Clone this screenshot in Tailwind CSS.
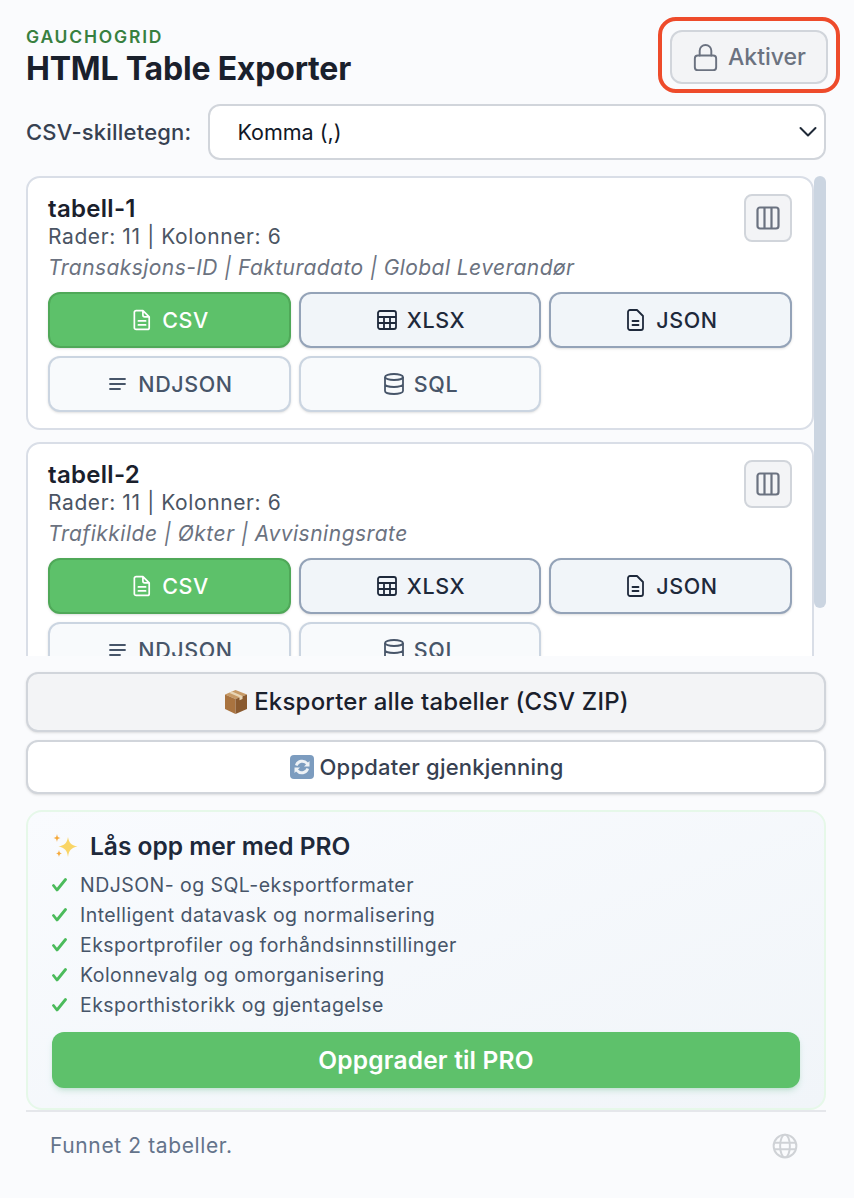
<!DOCTYPE html>
<html lang="no">
<head>
<meta charset="utf-8">
<title>HTML Table Exporter</title>
<script src="https://cdn.jsdelivr.net/npm/@tailwindcss/browser@4"></script>
</head>
<body class="m-0 bg-[#fafbfd] font-['Inter','Liberation_Sans',sans-serif] text-[#1a202c]">
<div class="w-[854px] h-[1198px] overflow-hidden pl-[26px] pr-[28px] flex flex-col">
  <header class="h-[104px] flex justify-between">
    <div class="pt-[26px]">
      <div class="text-[17.5px] leading-[21px] font-semibold tracking-[1.8px] text-[#38803f]">GAUCHOGRID</div>
      <h1 class="mt-[1px] text-[32px] leading-[42px] font-bold text-[#1a202c] tracking-[-0.2px]">HTML Table Exporter</h1>
    </div>
    <div class="mt-[30px] mr-[-2px]">
      <button class="relative w-[158px] h-[54px] rounded-[12px] border-2 border-[#d1d5db] bg-[#f3f4f6] flex items-center justify-center gap-[7px] pr-[2px] text-[23px] font-medium text-[#6b7280]">
        <span class="absolute left-[-14px] top-[-15px] w-[182px] h-[76px] rounded-[18px] border-[4px] border-[#ee4b2b]"></span>
        <svg class="w-[31px] h-[31px]" viewBox="0 0 24 24" fill="none" stroke="currentColor" stroke-width="1.5" stroke-linecap="round" stroke-linejoin="round"><path d="M16.5 10.5V6.75a4.5 4.5 0 1 0-9 0v3.75"/><rect x="3.75" y="10.5" width="16.5" height="11.25" rx="2.25"/></svg>
        Aktiver
      </button>
    </div>
  </header>

  <div class="h-[56px] flex items-center gap-[17px]">
    <label class="text-[22px] font-medium text-[#374151] whitespace-nowrap tracking-[0.2px]">CSV-skilletegn:</label>
    <div class="flex-1 h-[56px] rounded-[12px] border-2 border-[#d1d5db] bg-white flex items-center justify-between pl-[27px] pr-[6px] text-[21.5px] text-[#111827]">
      <span>Komma (,)</span>
      <svg class="w-[20px] h-[12px]" viewBox="0 0 20 12" fill="none" stroke="#1f2937" stroke-width="2" stroke-linecap="round" stroke-linejoin="round"><path d="M2.5 2l7.5 7.5L17.5 2"/></svg>
    </div>
  </div>

  <div class="relative mt-[16px] h-[480px] overflow-hidden pr-[12px] flex flex-col gap-[12px] shrink-0">
    <span class="absolute right-0 top-0 w-[12px] h-[432px] rounded-full bg-[#cbd5e1]"></span>

    <section class="shrink-0 h-[254px] rounded-[14px] border-2 border-[#d9dee7] bg-white pl-[20px] pr-[20px] pt-[16px] relative">
      <div class="text-[24px] leading-[30px] font-semibold text-[#1a202c] tracking-[0.3px]">tabell-1</div>
      <div class="text-[21px] leading-[26px] text-[#4b5563] tracking-[0.6px]">Rader: 11 | Kolonner: 6</div>
      <div class="mt-[2px] text-[21px] leading-[32px] italic text-[#6b7280] tracking-[0.43px]">Transaksjons-ID | Fakturadato | Global Leverandør</div>
      <button class="absolute right-[20px] top-[16px] w-[48px] h-[48px] rounded-[8px] border-2 border-[#d1d5db] bg-[#f3f4f6] flex items-center justify-center">
        <svg class="w-[24px] h-[24px]" viewBox="0 0 24 24" fill="none" stroke="#6b7280" stroke-width="2.2" stroke-linejoin="round"><rect x="1.5" y="1.5" width="21" height="21" rx="2.5"/><path d="M8.5 1.5v21M15.5 1.5v21"/></svg>
      </button>
      <div class="mt-[8px] grid grid-cols-[243px_242px_243px] gap-x-[8px] gap-y-[8px]">
        <button class="h-[56px] rounded-[12px] border-2 border-[#4fa858] bg-[#5dc16a] text-white flex items-center justify-center gap-[11px] pl-[3px] text-[21.5px] font-[550] tracking-[0.6px] shadow-sm">
          <svg class="w-[18px] h-[22px]" viewBox="0 0 20 24" fill="none" stroke="currentColor" stroke-width="1.9" stroke-linecap="round" stroke-linejoin="round"><path d="M3.5 1.5h7.5l7 7v12a2 2 0 0 1-2 2h-12.5a2 2 0 0 1-2-2v-17a2 2 0 0 1 2-2zM11 1.5v5a2 2 0 0 0 2 2h5M6 13h8M6 17.5h8"/></svg>
          CSV
        </button>
        <button class="h-[56px] rounded-[12px] border-2 border-[#94a3b8] bg-[#f1f5f9] text-[#1e293b] flex items-center justify-center gap-[10px] pl-[2px] text-[21.5px] font-[550] tracking-[0.6px] shadow-sm">
          <svg class="w-[20px] h-[20px]" viewBox="0 0 20 20" fill="none" stroke="currentColor" stroke-width="1.8" stroke-linejoin="round"><rect x="1" y="1" width="18" height="18" rx="2"/><path d="M1 7h18M1 13h18M7 7v12M13 7v12"/></svg>
          XLSX
        </button>
        <button class="h-[56px] rounded-[12px] border-2 border-[#94a3b8] bg-[#f1f5f9] text-[#1e293b] flex items-center justify-center gap-[12px] pl-[4px] text-[21.5px] font-[550] tracking-[0.6px] shadow-sm">
          <svg class="w-[17px] h-[22px]" viewBox="0 0 17 22" fill="none" stroke="currentColor" stroke-width="1.8" stroke-linecap="round" stroke-linejoin="round"><path d="M3 1h7l6 6v12a2 2 0 0 1-2 2H3a2 2 0 0 1-2-2V3a2 2 0 0 1 2-2zM5.5 12h6M5.5 16h6"/></svg>
          JSON
        </button>
        <button class="h-[56px] rounded-[12px] border-2 border-[#cbd5e1] bg-[#f8fafc] text-[#475569] flex items-center justify-center gap-[12px] pl-[3px] text-[21.5px] font-[550] tracking-[0.6px] shadow-sm">
          <svg class="w-[17px] h-[14px]" viewBox="0 0 17 14" fill="none" stroke="currentColor" stroke-width="1.8" stroke-linecap="round"><path d="M1 2h15M1 7h15M1 12h10"/></svg>
          NDJSON
        </button>
        <button class="h-[56px] rounded-[12px] border-2 border-[#cbd5e1] bg-[#f8fafc] text-[#475569] flex items-center justify-center gap-[10px] pl-[2px] text-[21.5px] font-[550] tracking-[0.6px] shadow-sm">
          <svg class="w-[20px] h-[22px]" viewBox="0 0 20 22" fill="none" stroke="currentColor" stroke-width="1.8"><ellipse cx="10" cy="4" rx="9" ry="3"/><path d="M1 4v14c0 1.7 4 3 9 3s9-1.3 9-3V4M1 11c0 1.7 4 3 9 3s9-1.3 9-3"/></svg>
          SQL
        </button>
      </div>
    </section>

    <section class="shrink-0 h-[254px] rounded-[14px] border-2 border-[#d9dee7] bg-white pl-[20px] pr-[20px] pt-[16px] relative">
      <div class="text-[24px] leading-[30px] font-semibold text-[#1a202c] tracking-[0.3px]">tabell-2</div>
      <div class="text-[21px] leading-[26px] text-[#4b5563] tracking-[0.6px]">Rader: 11 | Kolonner: 6</div>
      <div class="mt-[2px] text-[21px] leading-[32px] italic text-[#6b7280] tracking-[0.5px]">Trafikkilde | Økter | Avvisningsrate</div>
      <button class="absolute right-[20px] top-[16px] w-[48px] h-[48px] rounded-[8px] border-2 border-[#d1d5db] bg-[#f3f4f6] flex items-center justify-center">
        <svg class="w-[24px] h-[24px]" viewBox="0 0 24 24" fill="none" stroke="#6b7280" stroke-width="2.2" stroke-linejoin="round"><rect x="1.5" y="1.5" width="21" height="21" rx="2.5"/><path d="M8.5 1.5v21M15.5 1.5v21"/></svg>
      </button>
      <div class="mt-[8px] grid grid-cols-[243px_242px_243px] gap-x-[8px] gap-y-[8px]">
        <button class="h-[56px] rounded-[12px] border-2 border-[#4fa858] bg-[#5dc16a] text-white flex items-center justify-center gap-[11px] pl-[3px] text-[21.5px] font-[550] tracking-[0.6px] shadow-sm">
          <svg class="w-[18px] h-[22px]" viewBox="0 0 20 24" fill="none" stroke="currentColor" stroke-width="1.9" stroke-linecap="round" stroke-linejoin="round"><path d="M3.5 1.5h7.5l7 7v12a2 2 0 0 1-2 2h-12.5a2 2 0 0 1-2-2v-17a2 2 0 0 1 2-2zM11 1.5v5a2 2 0 0 0 2 2h5M6 13h8M6 17.5h8"/></svg>
          CSV
        </button>
        <button class="h-[56px] rounded-[12px] border-2 border-[#94a3b8] bg-[#f1f5f9] text-[#1e293b] flex items-center justify-center gap-[10px] pl-[2px] text-[21.5px] font-[550] tracking-[0.6px] shadow-sm">
          <svg class="w-[20px] h-[20px]" viewBox="0 0 20 20" fill="none" stroke="currentColor" stroke-width="1.8" stroke-linejoin="round"><rect x="1" y="1" width="18" height="18" rx="2"/><path d="M1 7h18M1 13h18M7 7v12M13 7v12"/></svg>
          XLSX
        </button>
        <button class="h-[56px] rounded-[12px] border-2 border-[#94a3b8] bg-[#f1f5f9] text-[#1e293b] flex items-center justify-center gap-[12px] pl-[4px] text-[21.5px] font-[550] tracking-[0.6px] shadow-sm">
          <svg class="w-[17px] h-[22px]" viewBox="0 0 17 22" fill="none" stroke="currentColor" stroke-width="1.8" stroke-linecap="round" stroke-linejoin="round"><path d="M3 1h7l6 6v12a2 2 0 0 1-2 2H3a2 2 0 0 1-2-2V3a2 2 0 0 1 2-2zM5.5 12h6M5.5 16h6"/></svg>
          JSON
        </button>
        <button class="h-[56px] rounded-[12px] border-2 border-[#cbd5e1] bg-[#f8fafc] text-[#475569] flex items-center justify-center gap-[12px] pl-[3px] text-[21.5px] font-[550] tracking-[0.6px] shadow-sm">
          <svg class="w-[17px] h-[14px]" viewBox="0 0 17 14" fill="none" stroke="currentColor" stroke-width="1.8" stroke-linecap="round"><path d="M1 2h15M1 7h15M1 12h10"/></svg>
          NDJSON
        </button>
        <button class="h-[56px] rounded-[12px] border-2 border-[#cbd5e1] bg-[#f8fafc] text-[#475569] flex items-center justify-center gap-[10px] pl-[2px] text-[21.5px] font-[550] tracking-[0.6px] shadow-sm">
          <svg class="w-[20px] h-[22px]" viewBox="0 0 20 22" fill="none" stroke="currentColor" stroke-width="1.8"><ellipse cx="10" cy="4" rx="9" ry="3"/><path d="M1 4v14c0 1.7 4 3 9 3s9-1.3 9-3V4M1 11c0 1.7 4 3 9 3s9-1.3 9-3"/></svg>
          SQL
        </button>
      </div>
    </section>
  </div>

  <button class="mt-[16px] h-[60px] shrink-0 rounded-[12px] border-2 border-[#d1d5db] bg-[#f3f4f6] flex items-center justify-center gap-[5px] text-[24px] font-medium tracking-[0.2px] text-[#1a202c] shadow-sm">
    <svg class="w-[26px] h-[26px]" viewBox="0 0 26 26"><path d="M12.5 1L2 5.5l10.5 4.5L24 5.5z" fill="#c79a66"/><path d="M2 5.5v14.5l10.5 5V10z" fill="#a9733f"/><path d="M24 5.5v14.5l-11.5 5V10z" fill="#8a5a2f"/><path d="M6 3.8l10.5 4.5v3l3-1.3v-3L9 2.5z" fill="#e8d5b5"/></svg>
    Eksporter alle tabeller (CSV ZIP)
  </button>
  <button class="mt-[8px] h-[54px] shrink-0 rounded-[12px] border-2 border-[#d1d5db] bg-white flex items-center justify-center gap-[5px] text-[22px] font-medium tracking-[0.2px] text-[#374151] shadow-sm">
    <svg class="w-[26px] h-[28px]" viewBox="0 0 26 26"><rect x="1" y="1" width="24" height="24" rx="4" fill="#7c9cbf"/><path d="M6 11a7.5 7.5 0 0 1 13-2.500l1.500-1.500v5.500H15l2-2a5 5 0 0 0-8.500 1.500zM20 15a7.500 7.500 0 0 1-13 2.500L5.500 19v-5.500H11l-2 2a5 5 0 0 0 8.500-1.500z" fill="#eef2f6"/></svg>
    Oppdater gjenkjenning
  </button>

  <section class="mt-[16px] h-[300px] shrink-0 rounded-[16px] border-2 border-[#e6f8e9] bg-gradient-to-br from-[#f9fbfe] to-[#f1f5f9] pl-[24px] pr-[24px] pt-[16px]">
    <div class="flex items-center h-[36px] gap-[12px]">
      <svg class="w-[26px] h-[26px]" viewBox="0 0 26 26" fill="#f9d566"><path d="M16 4c1 6 3 8 9.500 9.500C19 15 17 17 16 24c-1-7-3-9-9.500-10.500C13 12 15 10 16 4z"/><path d="M5 1c.5 3 1 3.500 3.500 4-2.500.5-3 1-3.500 4-.5-3-1-3.500-3.500-4 2.500-.5 3-1 3.500-4zM7 17c.4 2.500 1 3 3 3.500-2 .4-2.600 1-3 3.500-.4-2.500-1-3.100-3-3.500 2-.5 2.600-1 3-3.500z" fill="#f5a93b"/></svg>
      <h2 class="text-[24.5px] font-semibold text-[#1e293b]">Lås opp mer med PRO</h2>
    </div>
    <ul class="mt-[6px] flex flex-col text-[19.5px] leading-[30px] text-[#475569] tracking-[0.45px]">
      <li class="flex items-center gap-[13px]"><svg class="w-[15px] h-[14px]" viewBox="0 0 15 14" fill="none" stroke="#4cbb5c" stroke-width="2.8" stroke-linecap="round" stroke-linejoin="round"><path d="M1.5 7.5l3.5 4.5 8.5-10.500"/></svg>NDJSON- og SQL-eksportformater</li>
      <li class="flex items-center gap-[13px]"><svg class="w-[15px] h-[14px]" viewBox="0 0 15 14" fill="none" stroke="#4cbb5c" stroke-width="2.8" stroke-linecap="round" stroke-linejoin="round"><path d="M1.5 7.5l3.5 4.5 8.5-10.500"/></svg>Intelligent datavask og normalisering</li>
      <li class="flex items-center gap-[13px]"><svg class="w-[15px] h-[14px]" viewBox="0 0 15 14" fill="none" stroke="#4cbb5c" stroke-width="2.8" stroke-linecap="round" stroke-linejoin="round"><path d="M1.5 7.5l3.5 4.5 8.5-10.500"/></svg>Eksportprofiler og forhåndsinnstillinger</li>
      <li class="flex items-center gap-[13px]"><svg class="w-[15px] h-[14px]" viewBox="0 0 15 14" fill="none" stroke="#4cbb5c" stroke-width="2.8" stroke-linecap="round" stroke-linejoin="round"><path d="M1.5 7.5l3.5 4.5 8.5-10.500"/></svg>Kolonnevalg og omorganisering</li>
      <li class="flex items-center gap-[13px]"><svg class="w-[15px] h-[14px]" viewBox="0 0 15 14" fill="none" stroke="#4cbb5c" stroke-width="2.8" stroke-linecap="round" stroke-linejoin="round"><path d="M1.5 7.5l3.5 4.5 8.5-10.500"/></svg>Eksporthistorikk og gjentagelse</li>
    </ul>
    <button class="mt-[12px] w-full h-[56px] rounded-[12px] bg-[#5ec16b] text-white text-[24.5px] font-semibold tracking-[0.2px] shadow-md shadow-green-700/15">Oppgrader til PRO</button>
  </section>

  <footer class="h-[72px] shrink-0 border-t-2 border-[#e5e7eb] flex items-center justify-between pl-[24px] pr-[28px] pb-[2px]">
    <span class="text-[21px] text-[#64748b] tracking-[0.62px]">Funnet 2 tabeller.</span>
    <svg class="w-[26px] h-[26px]" viewBox="0 0 24 24" fill="none" stroke="#cfd2d6" stroke-width="1.8"><circle cx="12" cy="12" r="10.5"/><ellipse cx="12" cy="12" rx="4.5" ry="10.5"/><path d="M2 9h20M2 15h20"/></svg>
  </footer>
</div>
</body>
</html>
